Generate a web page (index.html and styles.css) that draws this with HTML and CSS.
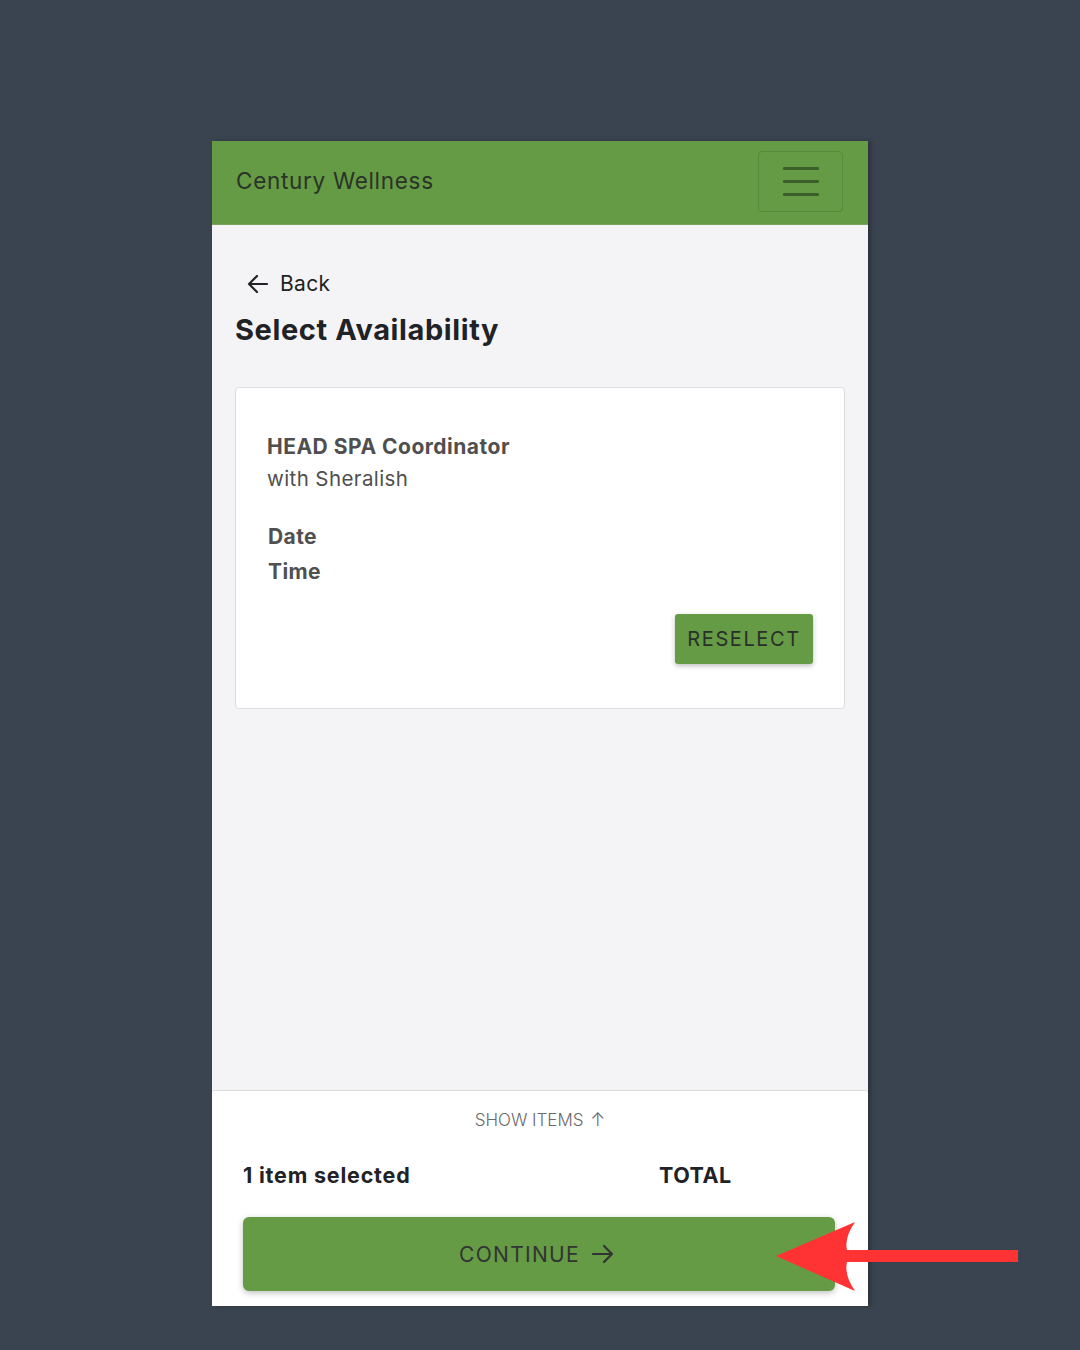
FILE: index.html
```html
<!DOCTYPE html>
<html>
<head>
<meta charset="utf-8">
<link rel="stylesheet" href="styles.css">
</head>
<body>
<div class="phone">
  <header class="topbar">
    <span class="brand">Century Wellness</span>
    <button class="menu-btn" aria-label="menu">
      <span></span><span></span><span></span>
    </button>
  </header>
  <main class="content">
    <a class="back">
      <svg width="22" height="20" viewBox="0 0 22 20" fill="none" stroke="#222" stroke-width="2.2" stroke-linecap="round" stroke-linejoin="round"><path d="M20 10H2M10 2L2 10L10 18"/></svg>
      <span>Back</span>
    </a>
    <h1 class="title">Select Availability</h1>
    <section class="card">
      <div class="svc-name">HEAD SPA Coordinator</div>
      <div class="svc-with">with Sheralish</div>
      <div class="labels">
        <div class="label">Date</div>
        <div class="label">Time</div>
      </div>
      <div class="card-actions">
        <button class="btn-reselect">RESELECT</button>
      </div>
    </section>
  </main>
  <footer class="footer">
    <div class="show-items">SHOW ITEMS <span class="up">↑</span></div>
    <div class="summary">
      <span class="count">1 item selected</span>
      <span class="total">TOTAL</span>
    </div>
    <button class="btn-continue">CONTINUE
      <svg width="24" height="20" viewBox="0 0 24 20" fill="none" stroke="#333" stroke-width="2.2" stroke-linecap="round" stroke-linejoin="round"><path d="M2 10H21M13 2L21 10L13 18"/></svg>
    </button>
  </footer>
</div>
<svg class="pointer" width="1080" height="1350" viewBox="0 0 1080 1350">
  <path d="M776 1256 L855 1222 Q844 1238 847 1250 L1018 1250 L1018 1262 L847 1262 Q844 1275 855 1291 Z" fill="#ff3333"/>
</svg>
</body>
</html>
```

FILE: styles.css
```css
* { box-sizing: border-box; }
html, body { margin: 0; padding: 0; }
body {
  background: #3a4450;
  width: 1080px;
  height: 1350px;
  font-family: "Inter", "Lato", sans-serif;
  position: relative;
  overflow: hidden;
}
.phone {
  margin: 141px 0 0 212px;
  width: 656px;
  height: 1165px;
  background: #f4f4f6;
  display: flex;
  flex-direction: column;
  box-shadow: 3px 0 4px rgba(0,0,0,0.25);
}
.topbar {
  height: 84px;
  background: #649b44;
  border-bottom: 1px solid #7aa35e;
  display: flex;
  align-items: center;
  justify-content: space-between;
  padding: 0 25px 0 24px;
}
.brand {
  font-size: 22.5px;
  color: #2b3328;
  letter-spacing: 0.7px;
  margin-top: -4px;
}
.menu-btn {
  width: 85px;
  height: 61px;
  margin-top: -2px;
  background: transparent;
  border: 1px solid #578a3a;
  border-radius: 4px;
  display: flex;
  flex-direction: column;
  align-items: center;
  justify-content: center;
  gap: 10px;
  padding: 0;
}
.menu-btn span {
  display: block;
  width: 36px;
  height: 3px;
  background: #3a5f28;
  border-radius: 1px;
}
.content {
  flex: 1;
  padding: 46px 23px 0 23px;
}
.back {
  display: flex;
  align-items: center;
  gap: 11px;
  padding-left: 12px;
  font-size: 21px;
  color: #222;
  letter-spacing: 0.3px;
}
.title {
  margin: 16px 0 0 0;
  font-size: 29px;
  font-weight: 700;
  color: #1f2226;
  line-height: 36px;
  letter-spacing: 0.6px;
}
.card {
  margin-top: 39px;
  background: #fff;
  border: 1px solid #dcdcdf;
  border-radius: 4px;
  height: 322px;
  padding: 45px 31px 0 31px;
}
.svc-name {
  font-size: 21px;
  font-weight: 700;
  color: #4f4f4f;
  line-height: 28px;
  letter-spacing: 0.5px;
}
.svc-with {
  font-size: 20.5px;
  color: #4f4f4f;
  line-height: 36px;
  letter-spacing: 0.4px;
}
.labels { margin-top: 22px; }
.label {
  font-size: 21px;
  font-weight: 700;
  color: #505050;
  line-height: 35px;
  padding-left: 1px;
  letter-spacing: 0.4px;
}
.card-actions {
  display: flex;
  justify-content: flex-end;
  margin-top: 25px;
}
.btn-reselect {
  width: 138px;
  height: 50px;
  background: #649b44;
  border: none;
  border-radius: 3px;
  color: #2b2f2a;
  font-family: inherit;
  font-size: 20px;
  letter-spacing: 1.6px;
  box-shadow: 0 2px 5px rgba(0,0,0,0.25);
}
.footer {
  height: 216px;
  background: #fff;
  border-top: 1px solid #dadada;
  border-radius: 3px 3px 0 0;
  padding: 0 31px 15px 31px;
  display: flex;
  flex-direction: column;
}
.show-items {
  text-align: center;
  margin-top: 17px;
  font-size: 17px;
  font-weight: 300;
  color: #6a6a6a;
  line-height: 24px;
}
.show-items .up { font-size: 18px; margin-left: 2px; }
.summary {
  margin-top: 29px;
  display: flex;
  align-items: center;
  font-size: 21.5px;
  font-weight: 700;
  color: #1f2226;
  line-height: 28px;
}
.count { width: 416px; letter-spacing: 0.8px; }
.total { letter-spacing: 0.5px; }
.btn-continue {
  margin-top: 28px;
  height: 74px;
  width: 592px;
  background: #649b44;
  border: none;
  border-radius: 6px;
  box-shadow: 0 2px 6px rgba(0,0,0,0.25);
  font-family: inherit;
  font-size: 21px;
  letter-spacing: 1.3px;
  color: #333;
  display: flex;
  align-items: center;
  justify-content: center;
  gap: 11px;
  padding-right: 10px;
}
.pointer {
  position: absolute;
  left: 0;
  top: 0;
  pointer-events: none;
}
```
